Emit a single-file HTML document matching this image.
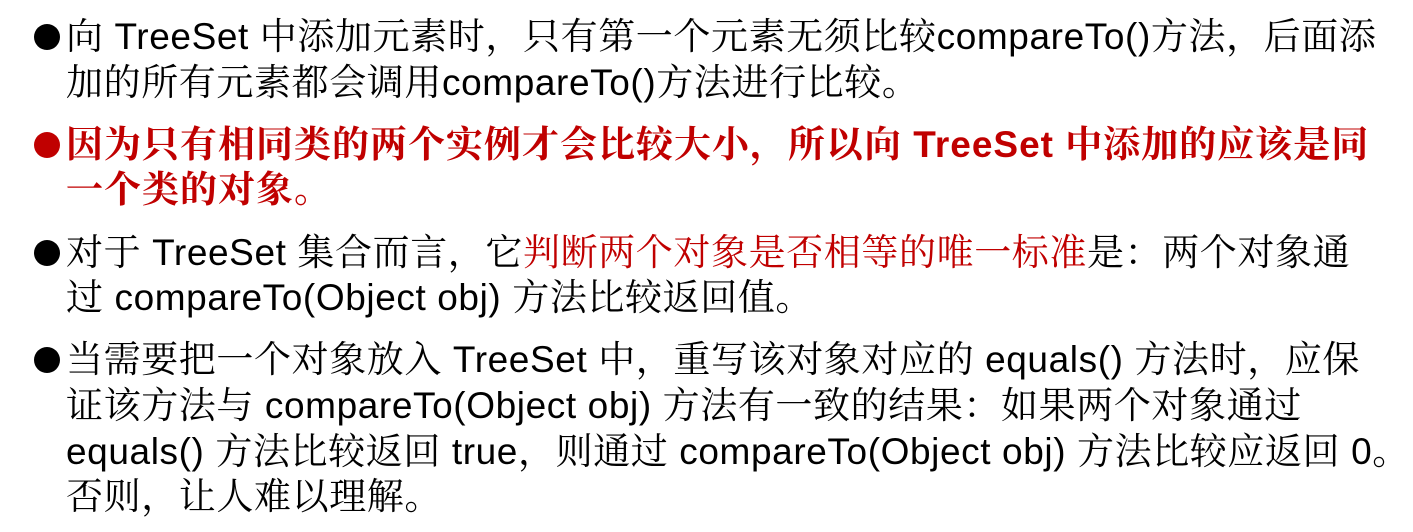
<!DOCTYPE html>
<html><head><meta charset="utf-8"><style>
body{margin:0;width:1413px;height:532px;background:#fff;overflow:hidden;position:relative;font-family:"Liberation Sans","Noto Serif CJK SC",serif;font-size:37px;letter-spacing:0.6px;color:#000}
.l{position:absolute;left:66px;white-space:nowrap;line-height:40px}
.b{position:absolute;left:34px;width:26px;height:26px;border-radius:50%;background:#000}
.r{color:#c00000}
.bold{font-weight:bold}
</style></head><body>
<div class="b" style="top:24px"></div>
<div class="l" style="top:17px">向 TreeSet 中添加元素时，只有第一个元素无须比较compareTo()方法，后面添</div>
<div class="l" style="top:63px">加的所有元素都会调用compareTo()方法进行比较。</div>
<div class="b" style="top:132px;background:#c00000"></div>
<div class="l r bold" style="top:125px;letter-spacing:1px">因为只有相同类的两个实例才会比较大小，所以向 TreeSet 中添加的应该是同</div>
<div class="l r bold" style="top:170px;letter-spacing:1px">一个类的对象。</div>
<div class="b" style="top:240px"></div>
<div class="l" style="top:233px">对于 TreeSet 集合而言，它<span class="r">判断两个对象是否相等的唯一标准</span>是：两个对象通</div>
<div class="l" style="top:278px">过 compareTo(Object obj) 方法比较返回值。</div>
<div class="b" style="top:347px"></div>
<div class="l" style="top:340px">当需要把一个对象放入 TreeSet 中，重写该对象对应的 equals() 方法时，应保</div>
<div class="l" style="top:386px">证该方法与 compareTo(Object obj) 方法有一致的结果：如果两个对象通过</div>
<div class="l" style="top:432px">equals() 方法比较返回 true，则通过 compareTo(Object obj) 方法比较应返回 0。</div>
<div class="l" style="top:477px">否则，让人难以理解。</div>
</body></html>
